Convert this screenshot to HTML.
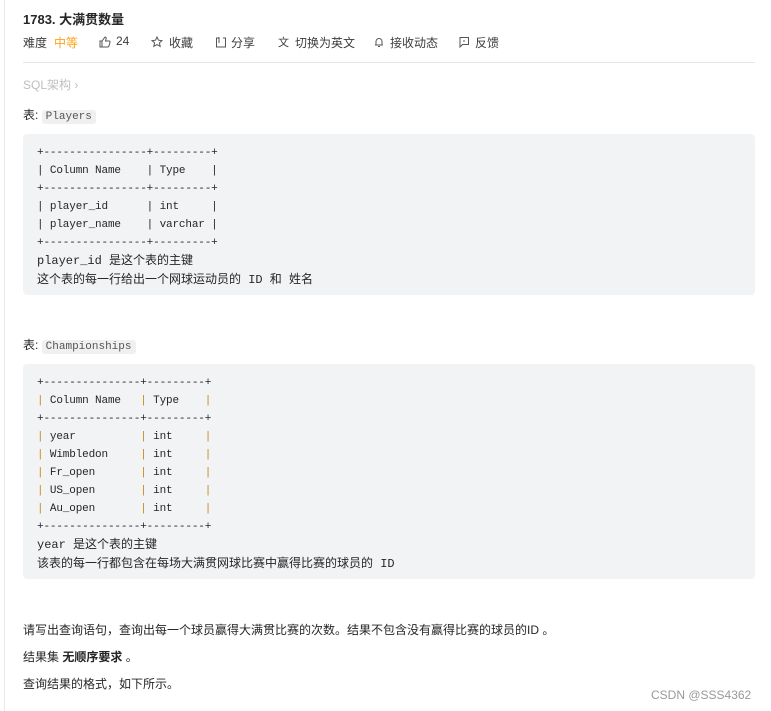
<!DOCTYPE html>
<html><head><meta charset="utf-8"><style>
body{margin:0;width:771px;height:711px;background:#fff;font-family:"Liberation Sans","Noto Sans CJK SC",sans-serif;color:#262626;position:relative;overflow:hidden}
.lb{position:absolute;left:4px;top:0;width:1px;height:711px;background:#e8e8e8}
.a{position:absolute;white-space:nowrap}
.t{left:23px;top:9px;font-size:13px;font-weight:bold;color:#262626}
.meta{left:23px;top:34px;font-size:12px;color:#3c3c3c}
.meta span{position:absolute;top:0}
.hr{position:absolute;left:23px;top:62px;width:732px;height:1px;background:#e6e6e6}
.sql{left:23px;top:76px;font-size:12px;color:#bfbfbf}
.lab{left:23px;font-size:12px;color:#262626}
.code{background:#f0f0f0;color:#555;border-radius:3px;padding:1px 4px;font-family:"Liberation Mono",monospace;font-size:11px}
.pre{position:absolute;left:23px;width:732px;background:#f2f3f5;border-radius:4px;padding:0 0 0 14px;font-family:"Liberation Mono","Noto Sans CJK SC",monospace;font-size:11px;line-height:18px;color:#262626;white-space:pre;margin:0;letter-spacing:-0.15px}
.o{color:#c78a1f}
.p{left:23px;font-size:12px;color:#262626}
svg{position:absolute;top:2px}
</style></head><body>
<div class="lb"></div>
<div class="a t">1783. 大满贯数量</div>
<div class="a meta" style="width:500px;height:16px">
<span style="left:0">难度</span><span style="left:31px;color:#ffa116">中等</span>
<svg style="left:76px" width="12" height="12" viewBox="0 0 12 12" fill="none" stroke="#555" stroke-width="1"><path d="M1 5h2v6H1zM3 5l3-4c1 0 1.5 1 1 2L6.5 5H10c.8 0 1.2.7 1 1.4l-1.2 4c-.2.4-.5.6-1 .6H3"/></svg>
<span style="left:93px">24</span>
<svg style="left:128px" width="12" height="12" viewBox="0 0 12 12" fill="none" stroke="#555"><path d="M6 1l1.5 3.2 3.5.4-2.6 2.3.8 3.5L6 8.6 2.8 10.4l.8-3.5L1 4.6l3.5-.4z"/></svg>
<span style="left:146px">收藏</span>
<svg style="left:192px" width="12" height="12" viewBox="0 0 12 12" fill="none" stroke="#555"><path d="M4 2H1.5v9h9V2H8M4 1v6"/></svg>
<span style="left:208px">分享</span>
<span style="left:255px;font-size:11px">文</span>
<span style="left:272px">切换为英文</span>
<svg style="left:350px" width="12" height="12" viewBox="0 0 12 12" fill="none" stroke="#555"><path d="M3 9V5.5a3 3 0 016 0V9H2h8M5 10.5h2"/></svg>
<span style="left:367px">接收动态</span>
<svg style="left:435px" width="12" height="12" viewBox="0 0 12 12" fill="none" stroke="#555"><path d="M1.5 1.5h9v7h-6L2 11V1.5zM6 4v2"/></svg>
<span style="left:452px">反馈</span>
</div>
<div class="hr"></div>
<div class="a sql">SQL架构 ›</div>
<div class="a lab" style="top:106px">表: <span class="code">Players</span></div>
<div class="pre" style="top:134px;height:161px;padding-top:10px;box-sizing:border-box">+----------------+---------+
| Column Name    | Type    |
+----------------+---------+
| player_id      | int     |
| player_name    | varchar |
+----------------+---------+
<span style="font-size:12px;letter-spacing:0">player_id 是这个表的主键
这个表的每一行给出一个网球运动员的 ID 和 姓名</span></div>
<div class="a lab" style="top:336px">表: <span class="code">Championships</span></div>
<div class="pre" style="top:364px;height:215px;padding-top:10px;box-sizing:border-box">+---------------+---------+
<span class="o">|</span> Column Name   <span class="o">|</span> Type    <span class="o">|</span>
+---------------+---------+
<span class="o">|</span> year          <span class="o">|</span> int     <span class="o">|</span>
<span class="o">|</span> Wimbledon     <span class="o">|</span> int     <span class="o">|</span>
<span class="o">|</span> Fr_open       <span class="o">|</span> int     <span class="o">|</span>
<span class="o">|</span> US_open       <span class="o">|</span> int     <span class="o">|</span>
<span class="o">|</span> Au_open       <span class="o">|</span> int     <span class="o">|</span>
+---------------+---------+
<span style="font-size:12px;letter-spacing:0">year 是这个表的主键
该表的每一行都包含在每场大满贯网球比赛中赢得比赛的球员的 ID</span></div>
<div class="a p" style="top:621px">请写出查询语句，查询出每一个球员赢得大满贯比赛的次数。结果不包含没有赢得比赛的球员的ID 。</div>
<div class="a p" style="top:648px">结果集 <b>无顺序要求</b> 。</div>
<div class="a p" style="top:675px">查询结果的格式，如下所示。</div>
<div class="a" style="left:651px;top:688px;font-size:12px;color:#999">CSDN @SSS4362</div>
</body></html>
